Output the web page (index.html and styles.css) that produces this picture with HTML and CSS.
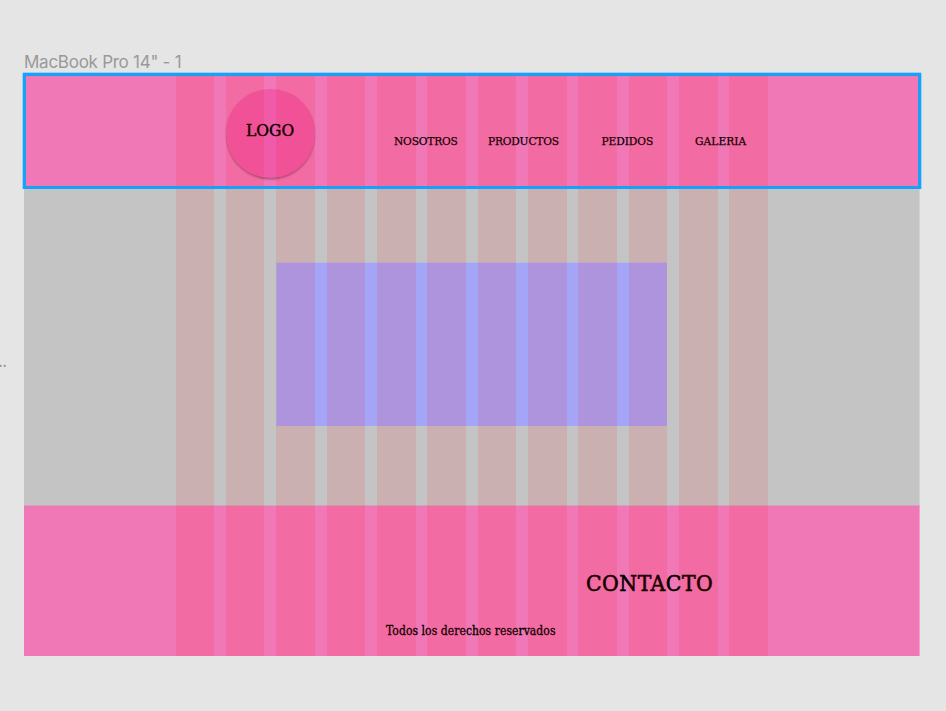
FILE: index.html
```
<!DOCTYPE html>
<html lang="es">
<head>
<meta charset="utf-8">
<title>MacBook Pro 14" - 1</title>
<link rel="stylesheet" href="styles.css">
</head>
<body>
<div class="side-label">..</div>
<div class="frame-label">MacBook Pro 14" - 1</div>
<div class="frame">
  <header class="header">
    <div class="logo"><span>LOGO</span></div>
    <nav class="nav">
      <span class="nosotros">NOSOTROS</span>
      <span class="productos">PRODUCTOS</span>
      <span class="pedidos">PEDIDOS</span>
      <span class="galeria">GALERIA</span>
    </nav>
  </header>
  <main class="main"><div class="banner"></div></main>
  <footer class="footer">
    <h2 class="contact"><span>CONTACTO</span></h2>
    <p class="rights"><span>Todos los derechos reservados</span></p>
  </footer>
  <div class="columns">
    <i></i><i></i><i></i><i></i><i></i><i></i><i></i><i></i><i></i><i></i><i></i><i></i>
  </div>
  <div class="selection"></div>
</div>
</body>
</html>
```
FILE: styles.css
```
* { box-sizing: border-box; }
body {
  margin: 0;
  height: 711px;
  padding: 50px 0 0 24px;
  overflow: hidden;
  position: relative;
  background: #e5e5e5;
  font-family: "DejaVu Serif Condensed", "DejaVu Serif", serif;
  font-stretch: condensed;
  color: #000;
}
.side-label {
  position: absolute;
  left: -2px;
  top: 349px;
  font: 17px/24px Inter, sans-serif;
  letter-spacing: -0.6px;
  color: #999;
}
.frame-label {
  height: 24px;
  font: 17px/24px Inter, sans-serif;
  letter-spacing: -0.26px;
  color: #999;
}
.frame {
  position: relative;
  width: 895px;
  height: 582px;
  display: flex;
  flex-direction: column;
  background: #c4c4c4;
  box-shadow: 1px 0 0 #d2d2d2;
}
.header {
  height: 114px;
  padding: 14.5px 0 0 201.5px;
  display: flex;
  align-items: flex-start;
  background: #f178b6;
}
.logo {
  width: 89.5px;
  height: 89px;
  padding: 30px 0 0 20.5px;
  border-radius: 50%;
  background: #f05ba9;
  box-shadow: 0 1.5px 2px rgba(0, 0, 0, 0.3);
  font-size: 17.3px;
  line-height: 22px;
  -webkit-text-stroke: 0.45px #000;
}
.nav {
  display: flex;
  padding: 44.5px 0 0 79px;
  font-size: 11.8px;
  line-height: 16px;
  white-space: nowrap;
  -webkit-text-stroke: 0.25px #000;
}
.nosotros { width: 94px; letter-spacing: -0.17px; }
.productos { width: 113.5px; letter-spacing: -0.18px; }
.pedidos { width: 93.5px; letter-spacing: -0.06px; }
.galeria { letter-spacing: 0.08px; }
.main {
  height: 317px;
  padding: 75px 0 0 253px;
}
.banner {
  width: 390px;
  height: 163px;
  background: #a5a5f7;
  box-shadow: 0 -1px 0 #b9b9d8, -1px 0 0 #b0b0e6;
}
.footer {
  flex: 1;
  border-top: 1px solid #d0a6bc;
  background: #f178b6;
  box-shadow: 1px 0 0 #eca5c9;
}
.contact {
  margin: 0;
  padding: 63px 0 0 562px;
  font-size: 22.7px;
  font-weight: 400;
  line-height: 28px;
  letter-spacing: 0.5px;
  -webkit-text-stroke: 0.55px #000;
}
.rights {
  margin: 0;
  padding: 26px 0 0 362px;
  font-size: 12px;
  line-height: 16px;
  letter-spacing: 0.07px;
  -webkit-text-stroke: 0.3px #000;
}
.columns {
  position: absolute;
  inset: 0 auto 0 151.546875px;
  display: flex;
  gap: 11.75px;
}
.columns i {
  width: 38.59375px;
  background: rgba(255, 0, 0, 0.1);
}
.selection {
  position: absolute;
  left: -1px;
  top: -1px;
  width: 898px;
  height: 116px;
  border: 3px solid #18a0fb;
  box-shadow: 0 -1px 0 #a3cfee, -1px 0 0 #a3cfee, 1px 0 0 #a3cfee;
}
```
